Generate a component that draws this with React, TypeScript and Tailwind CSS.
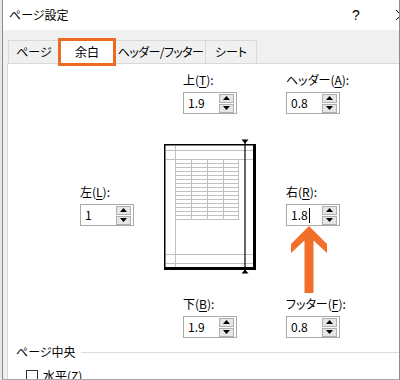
import React from "react";

const font = "font-['Noto_Sans_CJK_JP',sans-serif] [font-feature-settings:'palt']";

function Arrow({ up }: { up: boolean }) {
  return (
    <svg width="7" height="4" viewBox="0 0 7 4">
      <polygon points={up ? "0,4 3.5,0 7,4" : "0,0 7,0 3.5,4"} fill="#000" />
    </svg>
  );
}

function Spin() {
  return (
    <div className="mr-[2px] flex w-[15px] flex-col gap-[1px]">
      <div className="flex h-[9px] items-center justify-center border border-[#b0b0b0] bg-[#e6e6e6]">
        <Arrow up />
      </div>
      <div className="flex h-[9px] items-center justify-center border border-[#b0b0b0] bg-[#e6e6e6]">
        <Arrow up={false} />
      </div>
    </div>
  );
}

function Field({ label, k, value, cursor }: { label: string; k: string; value: string; cursor?: boolean }) {
  return (
    <div className="flex flex-col">
      <div className="h-[16px] whitespace-nowrap text-[12px] leading-[16px] text-black">
        {label}(<span className="underline underline-offset-2">{k}</span>):
      </div>
      <div className="mt-[4px] flex h-[22px] w-[54px] items-center border border-[#a9a9a9] bg-white">
        <div className="flex flex-1 items-center pl-[4px] text-[12px] text-black">
          <span>{value}</span>
          {cursor && <span className="ml-[1px] inline-block h-[15px] w-px bg-black" />}
        </div>
        <Spin />
      </div>
    </div>
  );
}

function Preview() {
  const rows = Array.from({ length: 15 }, (_, i) => 27.5 + i * 4);
  return (
    <svg width="102" height="140" viewBox="0 0 102 140">
      <rect x="4" y="8" width="92" height="126" fill="#000" />
      <rect x="5.5" y="9.5" width="87.5" height="121.5" fill="#fff" />
      <g stroke="#c0c0c0" strokeWidth="1">
        <line x1="15.5" y1="10" x2="15.5" y2="131" />
        <line x1="6" y1="14.5" x2="93" y2="14.5" />
        <line x1="6" y1="23.5" x2="93" y2="23.5" />
        <line x1="6" y1="118.5" x2="93" y2="118.5" />
        <line x1="6" y1="127.5" x2="93" y2="127.5" />
        {[31.5, 47.5, 63.5, 78.5].map((x) => (
          <line key={x} x1={x} y1="23.5" x2={x} y2="84" />
        ))}
        {rows.map((y) => (
          <line key={y} x1="15.5" y1={y} x2="78.5" y2={y} />
        ))}
      </g>
      <line x1="85" y1="6" x2="85" y2="136" stroke="#000" strokeWidth="1.2" />
      <polygon points="81.5,3.5 88.5,3.5 85,7.5" fill="#000" />
      <polygon points="81.5,137.5 88.5,137.5 85,133.5" fill="#000" />
    </svg>
  );
}

function BigArrow() {
  return (
    <svg width="38" height="68" viewBox="0 0 38 68">
      <polygon
        points="19,0 37,18 37,27 23.5,14.5 23.5,67 14.5,67 14.5,14.5 1,27 1,18"
        fill="#f26f2a"
      />
    </svg>
  );
}

export default function App() {
  return (
    <div className={`flex h-[380px] w-[400px] overflow-hidden bg-[#e8e8e8] ${font}`}>
      <div className="w-[2px]" />
      {/* window */}
      <div className="flex flex-1 flex-col overflow-hidden border-x border-b border-x-[#8c8c8c] border-b-[#a8a8a8]">
        {/* title bar */}
        <div className="flex h-[30px] shrink-0 items-center bg-white">
          <div className="flex-1 pl-[6px] text-[12px] text-black">ページ設定</div>
          <div className="w-[46px] text-center font-['Liberation_Sans',sans-serif] text-[14px] text-black">?</div>
          <div className="h-full w-[20px]">
            <svg width="20" height="30" viewBox="0 0 20 30">
              <line x1="17" y1="10" x2="27" y2="20" stroke="#000" strokeWidth="1" />
              <line x1="27" y1="10" x2="17" y2="20" stroke="#000" strokeWidth="1" />
            </svg>
          </div>
        </div>

        {/* body */}
        <div className="flex flex-1 flex-col bg-[#f0f0f0] pl-[4px] pt-[8px]">
          {/* tabs */}
          <div className="ml-[1px] flex h-[25px] items-end whitespace-nowrap text-[12px] text-black">
            <div className="flex h-[23px] w-[52px] items-center justify-center border border-b-0 border-[#d9d9d9]">ページ</div>
            <div className="relative z-10 -mb-[3px] -ml-[2px] flex h-[28px] w-[58px] items-center justify-center border-[3px] border-[#eb6b25] bg-white">
              余白
            </div>
            <div className="flex h-[23px] w-[90px] items-center justify-center border-r border-t border-[#d9d9d9] tracking-[-0.6px]">
              ヘッダー/フッター
            </div>
            <div className="flex h-[23px] w-[51px] items-center justify-center border-r border-t border-[#d9d9d9]">シート</div>
          </div>

          {/* panel */}
          <div className="flex flex-1 flex-col border-l border-t border-[#d9d9d9] bg-white pt-[8px]">
            <div className="flex">
              <div className="ml-[72px] mt-[112px] w-[54px]">
                <Field label="左" k="L" value="1" />
              </div>
              <div className="ml-[26px] flex w-[102px] flex-col">
                <div className="pl-[23px]">
                  <Field label="上" k="T" value="1.9" />
                </div>
                <div className="mt-[22px]">
                  <Preview />
                </div>
                <div className="mt-[20px] pl-[23px]">
                  <Field label="下" k="B" value="1.9" />
                </div>
              </div>
              <div className="ml-[24px] flex flex-col">
                <Field label="ヘッダー" k="A" value="0.8" />
                <div className="mt-[70px]">
                  <Field label="右" k="R" value="1.8" cursor />
                </div>
                <div className="ml-[4px] h-[68px]">
                  <BigArrow />
                </div>
                <div className="mt-[2px]">
                  <Field label="フッター" k="F" value="0.8" />
                </div>
              </div>
            </div>

            {/* center group */}
            <div className="mt-[6px] flex h-[16px] items-center pl-[8px]">
              <span className="text-[12px] leading-[16px] text-black">ページ中央</span>
              <div className="ml-[5px] h-px flex-1 bg-[#dcdcdc]" />
            </div>
            <div className="mt-[9px] flex items-center pl-[18px]">
              <div className="h-[12px] w-[12px] border border-[#333] bg-white" />
              <span className="ml-[5px] text-[12px] leading-[14px] text-black">
                水平(<span className="underline">Z</span>)
              </span>
            </div>
          </div>
        </div>
      </div>
    </div>
  );
}
